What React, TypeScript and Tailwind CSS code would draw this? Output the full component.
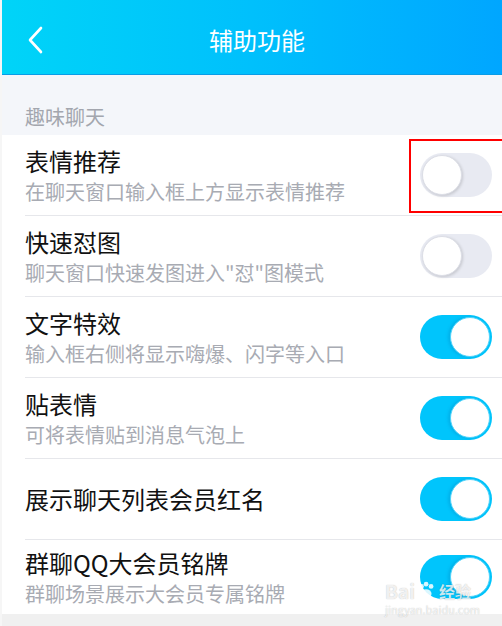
import React from 'react';

interface SettingItem {
  id: string;
  title: string;
  desc?: string;
  on: boolean;
}

const items: SettingItem[] = [
  { id: 'emoji', title: '表情推荐', desc: '在聊天窗口输入框上方显示表情推荐', on: false },
  { id: 'dui', title: '快速怼图', desc: '聊天窗口快速发图进入"怼"图模式', on: false },
  { id: 'text', title: '文字特效', desc: '输入框右侧将显示嗨爆、闪字等入口', on: true },
  { id: 'sticker', title: '贴表情', desc: '可将表情贴到消息气泡上', on: true },
  { id: 'redname', title: '展示聊天列表会员红名', on: true },
  { id: 'badge', title: '群聊QQ大会员铭牌', desc: '群聊场景展示大会员专属铭牌', on: true },
];

const font = { fontFamily: '"Noto Sans CJK SC", "Noto Sans", sans-serif' };

const Toggle = ({ on }: { on: boolean }) => (
  <div
    className={
      on
        ? 'relative w-[72px] h-[44px] rounded-full bg-[#00c5fc] shrink-0'
        : 'relative w-[72px] h-[44px] rounded-full bg-[#e8eaf2] shrink-0'
    }
  >
    <div
      className={
        on
          ? 'absolute top-[2px] right-[2px] w-[40px] h-[40px] rounded-full bg-white border border-[#4fd3fb] shadow-[-2px_0_3px_rgba(0,120,180,0.25)]'
          : 'absolute top-[2px] left-[2px] w-[40px] h-[40px] rounded-full bg-white border border-[#dcdee6] shadow-[1px_1px_3px_rgba(0,0,0,0.15)]'
      }
    />
  </div>
);

const Row = ({ item, last }: { item: SettingItem; last: boolean }) => (
  <div
    className={
      last
        ? 'flex items-center justify-between h-[74px] pr-[10px]'
        : 'flex items-center justify-between h-[81px] pr-[10px] border-b border-[#e6e7eb]'
    }
  >
    <div className="flex flex-col">
      <span className="text-[24px] leading-[34px] text-[#111111]">{item.title}</span>
      {item.desc && (
        <span className="text-[20px] leading-[28px] text-[#a8abb3]">{item.desc}</span>
      )}
    </div>
    <Toggle on={item.on} />
  </div>
);

export default function App() {
  return (
    <div className="w-[502px] h-[626px] overflow-hidden bg-[#f0f0f0] flex" style={font}>
      <div className="w-[2px] bg-[#f6f6f6] shrink-0" />
      <div className="flex-1 flex flex-col">
        {/* header */}
        <div className="relative h-[75px] flex items-center justify-center pl-[10px] bg-linear-to-r from-[#00d4f8] via-[#00c0fc] to-[#00a6ff] border-b border-[#0a9ce6]">
          <svg
            className="absolute left-[24px] top-[26px]"
            width="20"
            height="28"
            viewBox="0 0 20 28"
            fill="none"
            stroke="white"
            strokeWidth="2.6"
            strokeLinecap="round"
            strokeLinejoin="round"
          >
            <path d="M15 2 L4 14 L15 26" />
          </svg>
          <span className="text-[24px] text-white pt-[6px]">辅助功能</span>
        </div>

        {/* section label */}
        <div className="h-[60px] bg-[#f4f6fa] pl-[23px] flex items-end pb-[4px]">
          <span className="text-[20px] leading-[28px] text-[#a3a6ae]">趣味聊天</span>
        </div>

        {/* list */}
        <div className="relative bg-white pl-[23px]">
          {items.map((item, i) => (
            <Row key={item.id} item={item} last={i === items.length - 1} />
          ))}

          {/* red highlight box */}
          <div className="absolute left-[407px] top-[4px] w-[100px] h-[74px] border-2 border-[#ff0000]" />

          {/* watermark */}
          <div className="absolute left-[383px] top-[445px] flex flex-col items-start pointer-events-none">
            <div className="flex items-center gap-[2px] h-[22px] text-[19px] leading-[20px] font-bold text-white/80 [text-shadow:0_0_1px_rgba(0,0,0,0.3)]">
              <span>Bai</span>
              <svg width="20" height="20" viewBox="0 0 22 22" fill="rgba(255,255,255,0.85)">
                <circle cx="5" cy="6" r="2.6" />
                <circle cx="10" cy="3.5" r="2.6" />
                <circle cx="15.5" cy="6" r="2.6" />
                <ellipse cx="10" cy="14" rx="6" ry="5" />
              </svg>
              <span className="text-[16px]">经验</span>
            </div>
            <span className="mt-[1px] text-[11px] leading-[12px] text-white/80 [text-shadow:0_0_1px_rgba(0,0,0,0.3)]">
              jingyan.baidu.com
            </span>
          </div>
        </div>
      </div>
    </div>
  );
}
